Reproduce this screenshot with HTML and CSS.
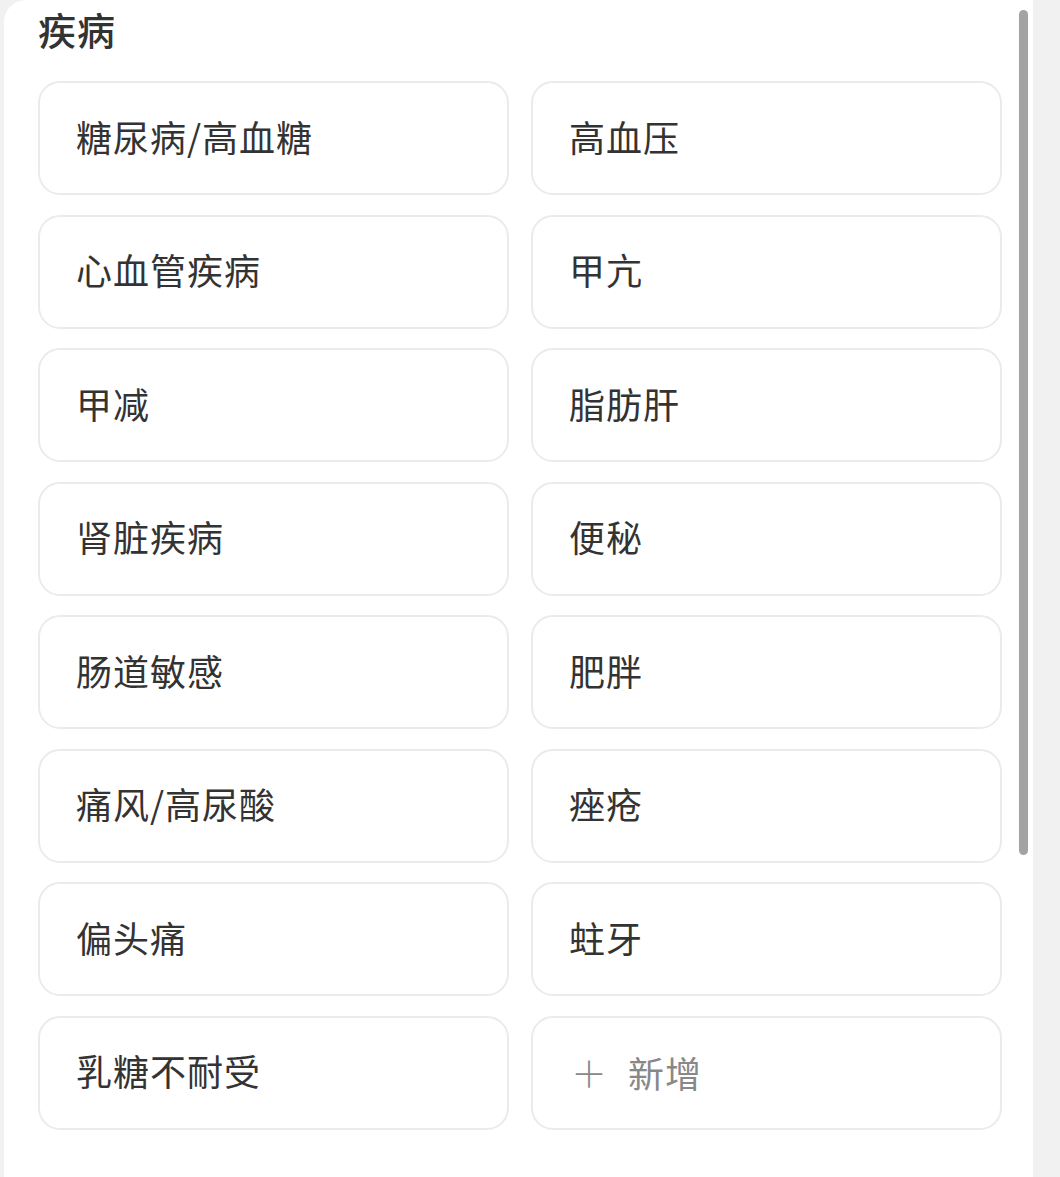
FILE: index.html
```html
<!DOCTYPE html>
<html lang="zh">
<head>
<meta charset="utf-8">
<link rel="stylesheet" href="styles.css">
</head>
<body>
<div class="panel">
  <div class="title">疾病</div>
  <div class="grid">
    <div class="card">糖尿病/高血糖</div>
    <div class="card">高血压</div>
    <div class="card">心血管疾病</div>
    <div class="card">甲亢</div>
    <div class="card">甲减</div>
    <div class="card">脂肪肝</div>
    <div class="card">肾脏疾病</div>
    <div class="card">便秘</div>
    <div class="card">肠道敏感</div>
    <div class="card">肥胖</div>
    <div class="card">痛风/高尿酸</div>
    <div class="card">痤疮</div>
    <div class="card">偏头痛</div>
    <div class="card">蛀牙</div>
    <div class="card">乳糖不耐受</div>
    <div class="card add"><span class="plus">＋</span><span>新增</span></div>
  </div>
  <div class="scrollbar"></div>
</div>
</body>
</html>
```

FILE: styles.css
```css
html, body {
  margin: 0;
  padding: 0;
  background: #f1f1f1;
  font-family: "Noto Sans CJK SC", "Noto Sans", sans-serif;
}
.panel {
  position: relative;
  margin-left: 4px;
  width: 995px;
  height: 1177px;
  padding-left: 34px;
  background: #ffffff;
  border-top-left-radius: 22px;
  overflow: hidden;
}
.title {
  padding-top: 6px;
  font-size: 38px;
  line-height: 46px;
  font-weight: 500;
  color: #333333;
  height: 75px;
  letter-spacing: 1px;
}
.grid {
  display: grid;
  grid-template-columns: 471px 471px;
  column-gap: 22px;
  row-gap: 19.5px;
}
.card {
  box-sizing: border-box;
  height: 114px;
  border: 2px solid #ebebeb;
  border-radius: 22px;
  display: flex;
  align-items: center;
  padding-left: 36px;
  padding-bottom: 5px;
  font-size: 36px;
  letter-spacing: 1px;
  color: #333333;
}
.add {
  color: #888888;
  padding-left: 38px;
  padding-bottom: 2px;
}
.plus {
  font-size: 36px;
  margin-right: 20px;
  font-weight: 300;
}
.scrollbar {
  position: absolute;
  left: 1015px;
  top: 10px;
  width: 9px;
  height: 845px;
  background: #a3a3a3;
  border-radius: 5px;
}
```
